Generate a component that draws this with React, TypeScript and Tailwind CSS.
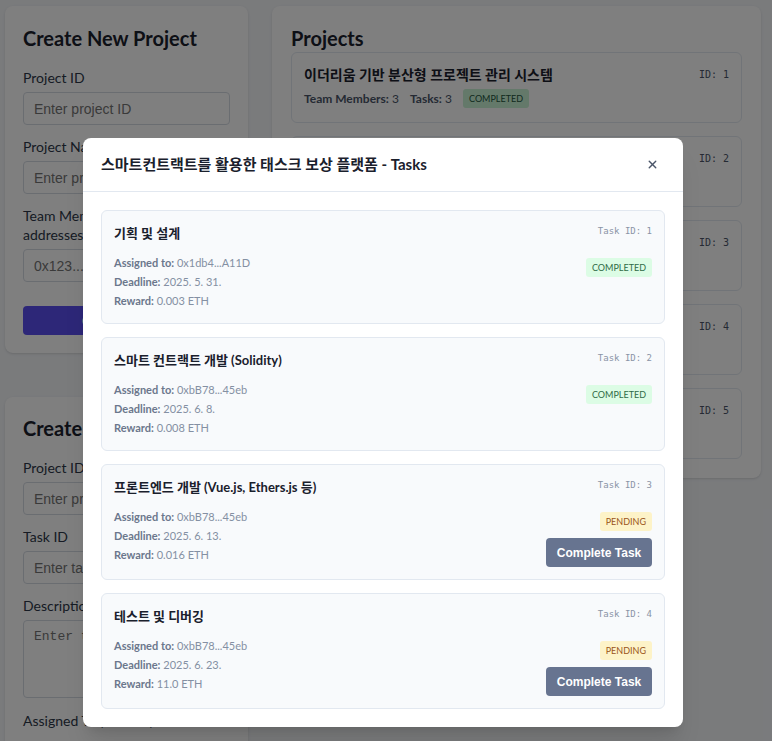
import { X } from 'lucide-react';

type Task = {
  id: number;
  title: string;
  assignee: string;
  deadline: string;
  reward: string;
  status: 'COMPLETED' | 'PENDING';
};

const TASKS: Task[] = [
  { id: 1, title: '기획 및 설계', assignee: '0x1db4...A11D', deadline: '2025. 5. 31.', reward: '0.003 ETH', status: 'COMPLETED' },
  { id: 2, title: '스마트 컨트랙트 개발 (Solidity)', assignee: '0xbB78...45eb', deadline: '2025. 6. 8.', reward: '0.008 ETH', status: 'COMPLETED' },
  { id: 3, title: '프론트엔드 개발 (Vue.js, Ethers.js 등)', assignee: '0xbB78...45eb', deadline: '2025. 6. 13.', reward: '0.016 ETH', status: 'PENDING' },
  { id: 4, title: '테스트 및 디버깅', assignee: '0xbB78...45eb', deadline: '2025. 6. 23.', reward: '11.0 ETH', status: 'PENDING' },
];

const PROJECTS = [
  { id: 1, name: '이더리움 기반 분산형 프로젝트 관리 시스템', members: 3, tasks: 3 },
  { id: 2, name: '스마트컨트랙트를 활용한 태스크 보상 플랫폼', members: 2, tasks: 4 },
  { id: 3, name: '블록체인 투표 시스템', members: 2, tasks: 2 },
  { id: 4, name: 'NFT 마켓플레이스', members: 3, tasks: 1 },
  { id: 5, name: 'DAO 거버넌스 도구', members: 2, tasks: 0 },
];

const sans = "font-['Lato','Noto_Sans_CJK_KR',sans-serif]";

function Field({ label, placeholder }: { label: string; placeholder: string }) {
  return (
    <div className="mb-[12px]">
      <label className="block text-[14px] leading-[19px] text-[#2d3748] mb-[5px]">{label}</label>
      <input
        placeholder={placeholder}
        className="block w-full h-[33px] px-[10px] rounded-[4px] border border-[#d5dbe3] bg-white text-[14px] font-['Liberation_Sans',sans-serif] placeholder:text-[#757575]"
      />
    </div>
  );
}

function Badge({ status }: { status: Task['status'] }) {
  const cls =
    status === 'COMPLETED'
      ? 'bg-[#dcfce5] text-[#2f6b45]'
      : 'bg-[#fdf3c8] text-[#9a5519]';
  return (
    <span className={`inline-block h-[19px] leading-[19px] px-[6px] rounded-[3px] text-[9px] ${cls}`}>
      {status}
    </span>
  );
}

function TaskCard({ task }: { task: Task }) {
  return (
    <div className="flex justify-between rounded-[6px] border border-[#e2e8f0] bg-[#f8fafc] px-[12px] pt-[12px] pb-[12px] min-h-[114px]">
      <div>
        <h4 className="text-[13px] leading-[20px] font-bold text-[#1a202c]">{task.title}</h4>
        <div className="mt-[10px] text-[11px] leading-[19px] text-[#8490a3]">
          <p><span className="font-bold text-[#6b778c]">Assigned to:</span> {task.assignee}</p>
          <p><span className="font-bold text-[#6b778c]">Deadline:</span> {task.deadline}</p>
          <p><span className="font-bold text-[#6b778c]">Reward:</span> {task.reward}</p>
        </div>
      </div>
      <div className="flex flex-col items-end">
        <span className="font-['DejaVu_Sans_Mono',monospace] text-[9px] leading-[17px] text-[#8a94a6]">Task ID: {task.id}</span>
        <div className="mt-[13px]">
          <Badge status={task.status} />
        </div>
        {task.status === 'PENDING' && (
          <button className="mt-[7px] h-[29px] w-[106px] rounded-[4px] bg-[#677490] text-white text-[12px] font-bold font-['Liberation_Sans',sans-serif]">
            Complete Task
          </button>
        )}
      </div>
    </div>
  );
}

export default function App() {
  return (
    <div className={`relative h-[741px] overflow-hidden bg-[#f4f6f9] ${sans}`}>
      <div className="flex items-start gap-[24px] pl-[5px] pt-[6px]">
        {/* Left column */}
        <div className="w-[243px] flex flex-col gap-[44px]">
          <div className="rounded-[8px] bg-white px-[18px] pt-[19px] pb-[18px] shadow-sm">
            <h2 className="text-[20px] leading-[26px] font-bold text-[#1a202c] mb-[17px]">Create New Project</h2>
            <Field label="Project ID" placeholder="Enter project ID" />
            <Field label="Project Name" placeholder="Enter project name" />
            <div className="mb-[24px]">
              <label className="block text-[14px] leading-[19px] text-[#2d3748] mb-[5px]">
                <span className="whitespace-nowrap">Team Members (comma separated</span> addresses)
              </label>
              <input
                placeholder="0x123...,0x456..."
                className="block w-full h-[33px] px-[10px] rounded-[4px] border border-[#d5dbe3] bg-white text-[14px] font-['Liberation_Sans',sans-serif] placeholder:text-[#757575]"
              />
            </div>
            <button className="w-full h-[29px] rounded-[4px] bg-[#5a4ff0] text-white text-[14px] font-bold">
              Create Project
            </button>
          </div>

          <div className="rounded-[8px] bg-white px-[18px] pt-[18px] pb-[18px] shadow-sm">
            <h2 className="text-[20px] leading-[26px] font-bold text-[#1a202c] mb-[17px]">Create New Task</h2>
            <Field label="Project ID" placeholder="Enter project ID" />
            <Field label="Task ID" placeholder="Enter task ID" />
            <div className="mb-[13px]">
              <label className="block text-[14px] leading-[19px] text-[#2d3748] mb-[5px]">Description</label>
              <textarea
                placeholder="Enter task description"
                className="block w-full h-[78px] px-[10px] py-[6px] rounded-[4px] border border-[#d5dbe3] bg-white text-[13px] font-['Liberation_Mono',monospace] placeholder:text-[#757575] resize-none"
              />
            </div>
            <label className="block text-[14px] leading-[19px] text-[#2d3748]">Assigned To (address)</label>
          </div>
        </div>

        {/* Right column */}
        <div className="w-[489px] rounded-[8px] bg-white px-[19px] pt-[19px] pb-[19px] shadow-sm">
          <h2 className="text-[20px] leading-[26px] font-bold text-[#1a202c] mb-[1px]">Projects</h2>
          <div className="flex flex-col gap-[13px]">
            {PROJECTS.map((p) => (
              <div key={p.id} className="h-[71px] rounded-[6px] border border-[#e2e8f0] px-[12px] pt-[11px] flex justify-between">
                <div>
                  <h3 className="text-[14px] leading-[22px] font-bold text-[#1a202c]">{p.name}</h3>
                  <div className="mt-[3px] flex items-center gap-[11px] text-[12px] text-[#4a5568]">
                    <span><span className="font-bold">Team Members:</span> {p.members}</span>
                    <span><span className="font-bold">Tasks:</span> {p.tasks}</span>
                    <span className="inline-block h-[19px] leading-[19px] px-[6px] rounded-[3px] text-[9px] bg-[#c9f2d4] text-[#22543d]">COMPLETED</span>
                  </div>
                </div>
                <span className="font-['DejaVu_Sans_Mono',monospace] text-[10px] leading-[22px] text-[#4a5568]">ID: {p.id}</span>
              </div>
            ))}
          </div>
        </div>
      </div>

      {/* Overlay + modal */}
      <div className="absolute inset-0 bg-black/50">
        <div className="absolute left-[83px] top-[138px] w-[600px] rounded-[8px] bg-white shadow-xl">
          <div className="flex items-center justify-between h-[54px] px-[18px] border-b border-[#e2e8f0]">
            <h3 className="text-[15px] font-bold text-[#1a202c]">스마트컨트랙트를 활용한 태스크 보상 플랫폼 - Tasks</h3>
            <button className="mr-[6px] text-[#4a5568]">
              <X size={13} strokeWidth={2.5} />
            </button>
          </div>
          <div className="px-[18px] pt-[18px] pb-[18px] flex flex-col gap-[13px]">
            {TASKS.map((t) => (
              <TaskCard key={t.id} task={t} />
            ))}
          </div>
        </div>
      </div>
    </div>
  );
}
